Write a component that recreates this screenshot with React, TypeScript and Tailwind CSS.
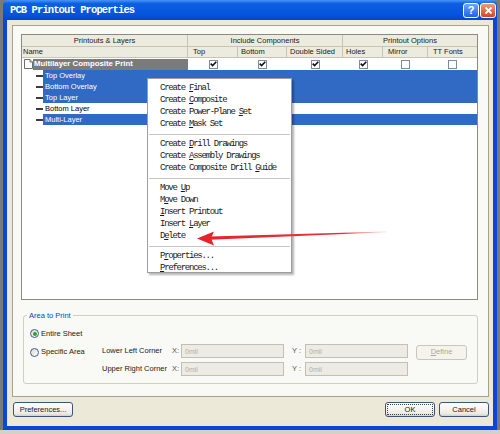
import React from "react";

const cols = "grid grid-cols-[166px_50px_49px_56px_40px_45px_49px]";

function Check({ on }: { on: boolean }) {
  return (
    <span className="flex h-[9px] w-[9px] items-center justify-center border border-[#7d8a99] bg-white">
      {on && (
        <svg width="7" height="6" viewBox="0 0 7 6">
          <path d="M0.7 2.6 L2.6 4.6 L6.3 0.8" fill="none" stroke="#111" strokeWidth="1.6" />
        </svg>
      )}
    </span>
  );
}

function Radio({ on }: { on: boolean }) {
  return (
    <span className="flex h-[9px] w-[9px] items-center justify-center rounded-full border border-[#3f5f8a] bg-[linear-gradient(135deg,#d8d8d0,#ffffff)]">
      {on && <span className="h-[4px] w-[4px] rounded-full bg-[#2aa02a]" />}
    </span>
  );
}

function TitleBar() {
  return (
    <div className="flex h-[20px] items-center rounded-t-[5px] bg-[linear-gradient(180deg,#4a94f8_0%,#0c5fe2_18%,#0553dc_75%,#0446c8_100%)] pl-[7px] pr-[1px]">
      <span className="font-['Liberation_Mono','Courier_New',monospace] text-[10.5px] font-bold tracking-[-0.9px] text-white">
        PCB Printout Properties
      </span>
      <div className="flex-1" />
      <div className="flex gap-[1px]">
        <span className="flex h-[15px] w-[16px] items-center justify-center rounded-[3px] border border-white bg-[linear-gradient(180deg,#6aa6f8,#2262e2)] text-[11px] font-bold text-white">
          ?
        </span>
        <span className="flex h-[15px] w-[16px] items-center justify-center rounded-[3px] border border-white bg-[linear-gradient(180deg,#ec9a7c,#d4461e)]">
          <svg width="9" height="9" viewBox="0 0 9 9">
            <path d="M1.5 1.5 L7.5 7.5 M7.5 1.5 L1.5 7.5" stroke="#fff" strokeWidth="1.8" />
          </svg>
        </span>
      </div>
    </div>
  );
}

function LayerRow({ name, sel }: { name: string; sel: boolean }) {
  return (
    <div className="flex h-[11px] items-center">
      <span className="ml-[14px] h-[2px] w-[7px] bg-[#3c3c3c]" />
      <div
        className={
          sel
            ? "flex h-full flex-1 items-center bg-[#316ac5] pl-[2px] text-white"
            : "flex h-full flex-1 items-center pl-[2px] text-black"
        }
      >
        {name}
      </div>
    </div>
  );
}

function LayerTable() {
  const head = "flex items-center border-b border-r border-[#c7c4b4] bg-[#ecebdf]";
  return (
    <div className="h-[266px] w-[457px] border border-[#8c8a80] bg-white">
      <div className={cols + " h-[12px]"}>
        <div className={head + " justify-center"}>Printouts &amp; Layers</div>
        <div className={head + " col-span-3 justify-center"}>Include Components</div>
        <div className={head + " col-span-3 justify-center border-r-0"}>Printout Options</div>
      </div>
      <div className={cols + " h-[11px]"}>
        <div className={head + " pl-[1px]"}>Name</div>
        <div className={head + " pl-[5px]"}>Top</div>
        <div className={head + " pl-[3px]"}>Bottom</div>
        <div className={head + " pl-[3px]"}>Double Sided</div>
        <div className={head + " pl-[3px]"}>Holes</div>
        <div className={head + " pl-[5px]"}>Mirror</div>
        <div className={head + " border-r-0 pl-[5px]"}>TT Fonts</div>
      </div>
      <div className={cols + " h-[12px]"}>
        <div className="flex items-center">
          <svg className="ml-[2px]" width="9" height="10" viewBox="0 0 9 10">
            <path d="M0.5 0.5 H6 L8.5 3 V9.5 H0.5 Z" fill="#fff" stroke="#6d6d6d" />
            <path d="M6 0.5 V3 H8.5" fill="#d8d8d8" stroke="#6d6d6d" />
          </svg>
          <div className="flex h-[11px] flex-1 items-center bg-[#7b7b7b] pl-[1px] text-[7.8px] font-bold text-white">
            Multilayer Composite Print
          </div>
        </div>
        {[true, true, true, true, false, false].map((on, i) => (
          <div key={i} className="flex items-center justify-center">
            <Check on={on} />
          </div>
        ))}
      </div>
      <LayerRow name="Top Overlay" sel />
      <LayerRow name="Bottom Overlay" sel />
      <LayerRow name="Top Layer" sel />
      <LayerRow name="Bottom Layer" sel={false} />
      <LayerRow name="Multi-Layer" sel />
    </div>
  );
}

function Field() {
  return (
    <div className="flex h-[14px] w-[103px] items-center border border-[#c2c0b3] bg-[#ecebe4] pl-[3px] text-[7px] text-[#b3b1a6]">
      0mil
    </div>
  );
}

function CornerRow({ label, define }: { label: string; define?: boolean }) {
  return (
    <div className="flex h-[14px] items-center whitespace-nowrap">
      <span className="w-[70px]">{label}</span>
      <span className="w-[9px] text-[#555]">X:</span>
      <Field />
      <span className="ml-[8px] w-[13px] text-[#555]">Y :</span>
      <Field />
      {define && (
        <div className="ml-[8px] mt-[2px] flex h-[15px] w-[51px] items-center justify-center rounded-[3px] border border-[#c9c7ba] bg-[#f4f3ee] text-[#aca899]">
          <u>D</u>efine
        </div>
      )}
    </div>
  );
}

function AreaToPrint() {
  return (
    <fieldset className="ml-[2px] mt-[11px] h-[73px] w-[455px] rounded-[3px] border border-[#d0d0bf]">
      <legend className="ml-[3px] h-[9px] px-[2px] leading-[9px] text-[#0046d5]">Area to Print</legend>
      <div className="pl-[6px]">
        <div className="mt-[8px] flex h-[11px] items-center">
          <Radio on />
          <span className="ml-[2px]">Entire Sheet</span>
        </div>
        <div className="mt-[5px] flex">
          <div className="flex h-[16px] w-[72px] items-center">
            <Radio on={false} />
            <span className="ml-[2px]">Specific Area</span>
          </div>
          <div className="flex flex-col gap-[4px]">
            <CornerRow label="Lower Left Corner" define />
            <CornerRow label="Upper Right Corner" />
          </div>
        </div>
      </div>
    </fieldset>
  );
}

const menu: ([string, string, string] | null)[] = [
  ["Create ", "F", "inal"],
  ["Create ", "C", "omposite"],
  ["Create Power-Plane ", "S", "et"],
  ["Create ", "M", "ask Set"],
  null,
  ["Create ", "D", "rill Drawings"],
  ["Create ", "A", "ssembly Drawings"],
  ["Create Composite Drill ", "G", "uide"],
  null,
  ["Move ", "U", "p"],
  ["M", "o", "ve Down"],
  ["", "I", "nsert Printout"],
  ["Insert ", "L", "ayer"],
  ["D", "e", "lete"],
  null,
  ["P", "r", "operties..."],
  ["", "P", "references..."],
];

function ContextMenu() {
  return (
    <div className="absolute left-[147px] top-[78px] h-[195px] w-[145px] border border-[#9d9d9d] bg-white py-[3px] font-['Liberation_Mono','Courier_New',monospace] text-[9px] tracking-[-1.26px] text-[#1a1a1a] shadow-[2px_2px_2px_rgba(0,0,0,0.3)]">
      {menu.map((m, i) =>
        m ? (
          <div key={i} className="flex h-[12px] items-center whitespace-pre pl-[12px]">
            {m[0]}
            <u className="underline-offset-1">{m[1]}</u>
            {m[2]}
          </div>
        ) : (
          <div key={i} className="flex h-[8px] items-center px-[1px]">
            <div className="h-px w-full bg-[#c6c6c6]" />
          </div>
        )
      )}
    </div>
  );
}

function Arrow() {
  return (
    <svg className="pointer-events-none absolute left-0 top-0" width="500" height="434" viewBox="0 0 500 434">
      <defs>
        <linearGradient id="fade" x1="200" y1="0" x2="390" y2="0" gradientUnits="userSpaceOnUse">
          <stop offset="0" stopColor="#e4232b" />
          <stop offset="0.75" stopColor="#e8333a" />
          <stop offset="1" stopColor="#f5a0a4" stopOpacity="0.3" />
        </linearGradient>
      </defs>
      <polygon points="210,236.6 386,231.4 386,232.2 210,239.8" fill="url(#fade)" />
      <polygon points="197,238.6 214,231.5 211,238.2 214,245.5" fill="#e4232b" />
    </svg>
  );
}

function XpButton({ w, focus, children }: { w: string; focus?: boolean; children: React.ReactNode }) {
  return (
    <div
      className={
        w +
        " flex h-[15px] items-center justify-center rounded-[3px] border border-[#3b5578] bg-[linear-gradient(180deg,#ffffff,#ecebe6_80%,#d6d0c5)] p-[1px]"
      }
    >
      <div
        className={
          focus
            ? "flex h-full w-full items-center justify-center border border-dotted border-[#444]"
            : "flex h-full w-full items-center justify-center"
        }
      >
        {children}
      </div>
    </div>
  );
}

export default function App() {
  return (
    <div className="relative h-[434px] w-[500px] overflow-hidden bg-[#7a7a7a] font-['Liberation_Sans',Arial,sans-serif] text-[7.5px] leading-none text-[#1a1a1a]">
      <div className="ml-[3px] flex h-[430px] w-[494px] flex-col">
        <TitleBar />
        <div className="flex flex-1 flex-col border-x-4 border-b-4 border-[#0b46d8] bg-[#ece9d8]">
          <div className="ml-[5px] mt-[5px] h-[372px] w-[477px] border border-[#a5a293] bg-[#f9f9f6] pl-[8px] pt-[8px]">
            <LayerTable />
            <AreaToPrint />
          </div>
          <div className="ml-[6px] mr-[4px] mt-[5px] flex items-center">
            <XpButton w="w-[60px]">Preferences...</XpButton>
            <div className="flex-1" />
            <div className="flex gap-[4px]">
              <XpButton w="w-[50px]" focus>
                OK
              </XpButton>
              <XpButton w="w-[50px]">Cancel</XpButton>
            </div>
          </div>
        </div>
      </div>
      <div className="h-[4px] bg-[#d4d1c8]" />
      <ContextMenu />
      <Arrow />
    </div>
  );
}
